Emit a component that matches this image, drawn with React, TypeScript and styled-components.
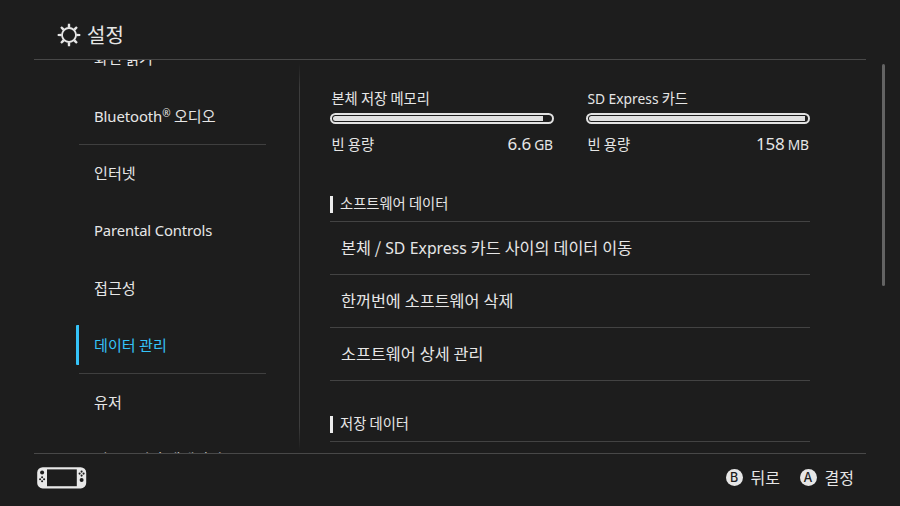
import React, { ReactNode } from 'react'
import styled, { createGlobalStyle, css } from 'styled-components'

const GlobalStyle = createGlobalStyle`
  :root {
    --bg: #1d1d1d;
    --fg: #e6e6e6;
    --line: #434343;
    --accent: #35c3f8;
  }
  * { box-sizing: border-box; }
  body {
    margin: 0;
    background: var(--bg);
    color: var(--fg);
    font-family: 'Noto Sans CJK KR', sans-serif;
  }
`

const Screen = styled.div`
  display: flex;
  flex-direction: column;
  width: 900px;
  height: 506px;
  overflow: hidden;
  background: var(--bg);
`

const Header = styled.header`
  display: flex;
  align-items: center;
  flex: none;
  height: 60px;
  margin: 0 34px;
  padding: 10px 0 0 23px;
  border-bottom: 1px solid #484848;
`

const Title = styled.h1`
  margin: 0 0 0 6px;
  font-size: 20px;
  font-weight: 400;
  line-height: 24px;
`

const Body = styled.div`
  display: flex;
  flex: none;
  height: 393px;
  overflow: hidden;
`

const Sidebar = styled.nav`
  width: 299px;
  padding-left: 76px;
  margin-top: -30px;
`

const NavLabel = styled.span<{ $active?: boolean }>`
  display: flex;
  align-items: center;
  height: 40px;
  padding-bottom: 3px;
  padding-left: ${p => p.$active ? 15 : 18}px;
  border-left: ${p => p.$active ? '3px solid var(--accent)' : 'none'};
  border-radius: 1px;
  color: ${p => p.$active ? 'var(--accent)' : 'inherit'};
  font-size: 15.1px;
  line-height: 22px;
  white-space: pre;
`

const NavRow = styled.div<{ $divided?: boolean }>`
  display: flex;
  align-items: center;
  width: 190px;
  height: 57.35px;
  ${p => p.$divided && css`
    background: linear-gradient(#3f3f3f, #3f3f3f) 3px 100% / 187px 1px no-repeat;
  `}

  &:last-child ${NavLabel} {
    padding-bottom: 4px;
  }
`

const Latin = styled.span<{ $size?: number, $spacing?: number }>`
  font-family: 'Noto Sans', 'Noto Sans CJK KR', sans-serif;
  font-size: ${p => p.$size ? `${p.$size}px` : 'inherit'};
  line-height: 1;
  letter-spacing: ${p => p.$spacing ?? 0}px;
`

const Sup = styled.sup`
  font: 10px/1 'Noto Sans', sans-serif;
  vertical-align: 5px;
`

const Separator = styled.div`
  width: 1px;
  height: 386px;
  margin-top: 4px;
  background: linear-gradient(transparent, #3d3d3d 24px, #3d3d3d 362px, transparent);
`

const Content = styled.main`
  width: 480px;
  margin-left: 30px;
  padding-top: 28px;
`

const ScrollThumb = styled.div`
  width: 3px;
  height: 222px;
  margin: 4px 0 0 72px;
  border-radius: 2px;
  background: #636363;
`

const StorageRow = styled.div`
  display: flex;
  justify-content: space-between;
  height: 99px;
`

const StorageItem = styled.div`
  width: 224px;
  font-size: 14.3px;
  line-height: 20px;
`

const StorageLabel = styled.div`
  height: 20px;
  padding-left: 1.4px;
  white-space: pre;
`

const Meter = styled.div`
  height: 11px;
  margin: 5px 0 10px;
  padding: 1px;
  border: 2px solid #e2e2e2;
  border-radius: 6px;
`

const MeterFill = styled.div`
  height: 100%;
  border-radius: 3px 0 0 3px;
  background: #e0e0e0;
`

const FreeRow = styled.div`
  display: flex;
  justify-content: space-between;
  align-items: baseline;
  padding: 0 1.4px;
`

const SectionHead = styled.h2`
  display: flex;
  align-items: center;
  height: 35px;
  margin: 0;
  border-bottom: 1px solid var(--line);
  font-size: 14.3px;
  font-weight: 400;

  &::before {
    content: '';
    width: 3px;
    height: 17px;
    margin-right: 7px;
    background: #ececec;
  }

  > span {
    padding-bottom: 3px;
  }
`

const Section = styled.section`
  margin-bottom: 26px;
`

const SectionItem = styled.div`
  display: flex;
  align-items: center;
  height: 53px;
  padding: 0 0 2px 11px;
  border-bottom: 1px solid var(--line);
  font-size: 16.25px;
  line-height: 24px;
  word-spacing: 0.3px;
  white-space: pre;
`

const Footer = styled.footer`
  display: flex;
  align-items: center;
  flex: 1;
  margin: 0 34px;
  padding: 0 12px 4px 3px;
  border-top: 1px solid #484848;
`

const Hints = styled.div`
  display: flex;
  gap: 19.5px;
  margin: -2px 0 0 auto;
`

const HintBox = styled.div`
  display: flex;
  align-items: center;
  gap: 8px;
  font-size: 16px;
  line-height: 20px;
`

const ButtonBadge = styled.span`
  display: flex;
  align-items: center;
  justify-content: center;
  width: 17px;
  height: 17px;
  border-radius: 50%;
  background: #e6e6e6;
  color: #1d1d1d;
  font: 500 12.5px/17px Inter, sans-serif;
`

const SettingsIcon = () =>
  <svg width='24' height='24' viewBox='-12 -12 24 24' fill='none' stroke='#e6e6e6'>
    <circle r='7' strokeWidth='1.8' />
    {[0, 45, 90, 135, 180, 225, 270, 315].map(a =>
      <path key={a} d='M-1.3 -7.4 L-1.1 -11.3 H1.1 L1.3 -7.4Z' fill='#e6e6e6' stroke='none' transform={`rotate(${a})`} />)}
  </svg>

const Pad = ({ x, y }: { x: number, y: number }) =>
  <g transform={`translate(${x} ${y})`}>
    <circle cy='-2' r='1.05' />
    <circle cy='2' r='1.05' />
    <circle cx='-2' r='1.05' />
    <circle cx='2' r='1.05' />
  </g>

const ConsoleIcon = () =>
  <svg width='50' height='22' viewBox='0 0 50 22' fill='#1d1d1d'>
    <rect x='0.2' y='0.2' width='49' height='21.2' rx='5.5' fill='#e8e8e8' />
    <rect x='10' y='2.4' width='29.8' height='16.8' />
    <circle cx='5.1' cy='5.6' r='2' />
    <Pad x={5.1} y={12.3} />
    <Pad x={44.6} y={6.6} />
    <circle cx='44.6' cy='13.1' r='2' />
  </svg>

interface NavEntry {
  label: ReactNode
  divided?: boolean
  active?: boolean
}

const navEntries: NavEntry[] = [
  { label: '화면 읽기' },
  { label: <><Latin $size={14.9} $spacing={-0.1}>Bluetooth</Latin><Sup>®</Sup> 오디오</>, divided: true },
  { label: '인터넷' },
  { label: <Latin $size={14.8} $spacing={-0.12}>Parental Controls</Latin> },
  { label: '접근성' },
  { label: '데이터 관리', divided: true, active: true },
  { label: '유저' },
  { label: '컨트롤러와 액세서리' },
]

interface StorageProps {
  label: ReactNode
  used: number
  free: string
  unit: string
}

const Storage = ({ label, used, free, unit }: StorageProps) =>
  <StorageItem>
    <StorageLabel>{label}</StorageLabel>
    <Meter><MeterFill style={{ width: `${used}%` }} /></Meter>
    <FreeRow>
      <span>빈 용량</span>
      <span><Latin $size={17} $spacing={-0.2}>{free}</Latin> <Latin $size={13.8} $spacing={-0.3}>{unit}</Latin></span>
    </FreeRow>
  </StorageItem>

const Hint = ({ button, label }: { button: string, label: string }) =>
  <HintBox><ButtonBadge>{button}</ButtonBadge>{label}</HintBox>

const App = () => <>
  <GlobalStyle />
  <Screen>
    <Header>
      <SettingsIcon />
      <Title>설정</Title>
    </Header>
    <Body>
      <Sidebar>
        {navEntries.map((e, i) => <NavRow key={i} $divided={e.divided}>
          <NavLabel $active={e.active}><span>{e.label}</span></NavLabel>
        </NavRow>)}
      </Sidebar>
      <Separator />
      <Content>
        <StorageRow>
          <Storage label='본체 저장 메모리' used={96.3} free='6.6' unit='GB' />
          <Storage label={<><Latin $size={13.8}>SD Express</Latin> 카드</>} used={99} free='158' unit='MB' />
        </StorageRow>
        <Section>
          <SectionHead><span>소프트웨어 데이터</span></SectionHead>
          <SectionItem><span>본체 / <Latin $size={15.8}>SD Express</Latin> 카드 사이의 데이터 이동</span></SectionItem>
          <SectionItem>한꺼번에 소프트웨어 삭제</SectionItem>
          <SectionItem>소프트웨어 상세 관리</SectionItem>
        </Section>
        <Section>
          <SectionHead><span>저장 데이터</span></SectionHead>
        </Section>
      </Content>
      <ScrollThumb />
    </Body>
    <Footer>
      <ConsoleIcon />
      <Hints>
        <Hint button='B' label='뒤로' />
        <Hint button='A' label='결정' />
      </Hints>
    </Footer>
  </Screen>
</>

export default App
